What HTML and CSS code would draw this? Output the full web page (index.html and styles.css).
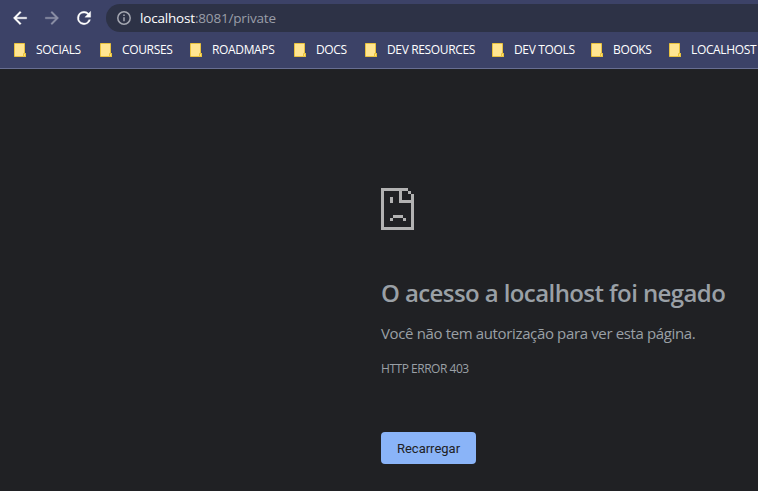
FILE: index.html
```html
<!DOCTYPE html>
<html lang="pt-BR">
<head>
<meta charset="utf-8">
<title>localhost</title>
<link rel="stylesheet" href="styles.css">
</head>
<body>
<svg class="defs" width="0" height="0" aria-hidden="true">
  <symbol id="folder" viewBox="0 0 12 14">
    <path d="M.5.5h10v10h1v3H.5z" fill="#ffe592" stroke="#e9c23e"/>
    <path d="M9.5 13.5v-3h2v3z" fill="#ffe070" stroke="#e9c23e"/>
  </symbol>
</svg>
<header class="chrome">
  <div class="toolbar">
    <svg class="nav" viewBox="0 0 24 24"><path d="M20 11H7.83l5.59-5.59L12 4l-8 8 8 8 1.41-1.41L7.83 13H20z"/></svg>
    <svg class="nav nav-off" viewBox="0 0 24 24"><path d="M12 4l-1.41 1.41L16.17 11H4v2h12.17l-5.58 5.59L12 20l8-8z"/></svg>
    <svg class="nav" viewBox="0 0 24 24"><path d="M17.65 6.35A7.96 7.96 0 0 0 12 4a8 8 0 1 0 7.73 10h-2.08A6 6 0 1 1 12 6c1.66 0 3.14.69 4.22 1.78L13 11h7V4z"/></svg>
    <div class="address">
      <svg class="info" viewBox="0 0 14 14"><circle cx="7" cy="7" r="6.2"/><path d="M7 6.2v4M7 3.6v1.4"/></svg>
      <span class="url"><span class="host">localhost</span>:8081/private</span>
    </div>
  </div>
  <nav class="bookmarks">
    <a class="bookmark"><svg><use href="#folder"/></svg><span>SOCIALS</span></a>
    <a class="bookmark"><svg><use href="#folder"/></svg><span>COURSES</span></a>
    <a class="bookmark"><svg><use href="#folder"/></svg><span>ROADMAPS</span></a>
    <a class="bookmark"><svg><use href="#folder"/></svg><span>DOCS</span></a>
    <a class="bookmark"><svg><use href="#folder"/></svg><span>DEV RESOURCES</span></a>
    <a class="bookmark"><svg><use href="#folder"/></svg><span>DEV TOOLS</span></a>
    <a class="bookmark"><svg><use href="#folder"/></svg><span>BOOKS</span></a>
    <a class="bookmark"><svg><use href="#folder"/></svg><span>LOCALHOST</span></a>
  </nav>
</header>
<main class="error">
  <svg class="sad" viewBox="0 0 11 14" shape-rendering="crispEdges">
    <path d="M0 0h9v1h1v1h1v12H0zM1 1v12h9V5H6V1zM7 1v3h3V2H9V1z" fill-rule="evenodd"/>
    <path d="M3 3h1v2H3zM4 9h3.33v1H4zM3 10h1v1H3zM7.33 10h1v1h-1z"/>
  </svg>
  <h1>O acesso a localhost foi negado</h1>
  <p class="message">Você não tem autorização para ver esta página.</p>
  <p class="code">HTTP ERROR 403</p>
  <button class="reload">Recarregar</button>
</main>
</body>
</html>
```
FILE: styles.css
```css
* { box-sizing: border-box; }
body {
  margin: 0;
  height: 491px;
  overflow: hidden;
  background: #202124;
  color: #9aa0a6;
  font-family: "Open Sans", "Noto Sans", sans-serif;
}
.defs { display: none; }
.chrome {
  height: 69px;
  background: #3c4267;
  border-bottom: 1px solid #686e91;
  overflow: hidden;
}
.toolbar {
  display: flex;
  align-items: center;
  gap: 12px;
  height: 36px;
  padding-left: 10px;
}
.nav { width: 20px; height: 20px; flex: none; fill: #fff; stroke: #fff; stroke-width: .4; }
.nav-off { fill: #8c90a6; stroke: #8c90a6; }
.address {
  flex: 1;
  display: flex;
  align-items: center;
  gap: 9px;
  height: 28px;
  padding-left: 11px;
  border-radius: 14px 0 0 14px;
  background: #2d3246;
}
.info { width: 14px; height: 14px; fill: none; stroke: #a4a7b1; stroke-width: 1.5; }
.url { font-size: 13.5px; letter-spacing: -.18px; color: #9a9ea8; white-space: nowrap; }
.host { color: #fff; }
.bookmarks {
  display: grid;
  grid-template-columns: 86px 90px 104px 71px 127px 99px 78px 100px;
  padding-left: 14px;
  height: 28px;
}
.bookmark {
  display: flex;
  align-items: center;
  gap: 10px;
  color: #fff;
  font-size: 12px;
  letter-spacing: -.35px;
  white-space: nowrap;
}
.bookmark svg { width: 12px; height: 14px; flex: none; }
.bookmark span { margin-top: -2px; }
.error { padding: 119px 0 0 381px; white-space: nowrap; }
.sad { display: block; width: 33px; height: 42px; fill: #b2b2b2; }
h1 { margin: 45px 0 0; font-size: 24px; line-height: 36px; font-weight: 600; letter-spacing: -.59px; }
.message { margin: 10px 0 0; font-size: 15px; line-height: 24px; letter-spacing: -.36px; }
.code { margin: 14px 0 0; font-size: 12px; line-height: 20px; letter-spacing: -.47px; }
.reload {
  display: block;
  width: 95px;
  height: 32px;
  margin-top: 53px;
  padding: 0;
  border: 0;
  border-radius: 4px;
  background: #8ab4f8;
  color: #202124;
  font: 13px Roboto, sans-serif;
}
```
